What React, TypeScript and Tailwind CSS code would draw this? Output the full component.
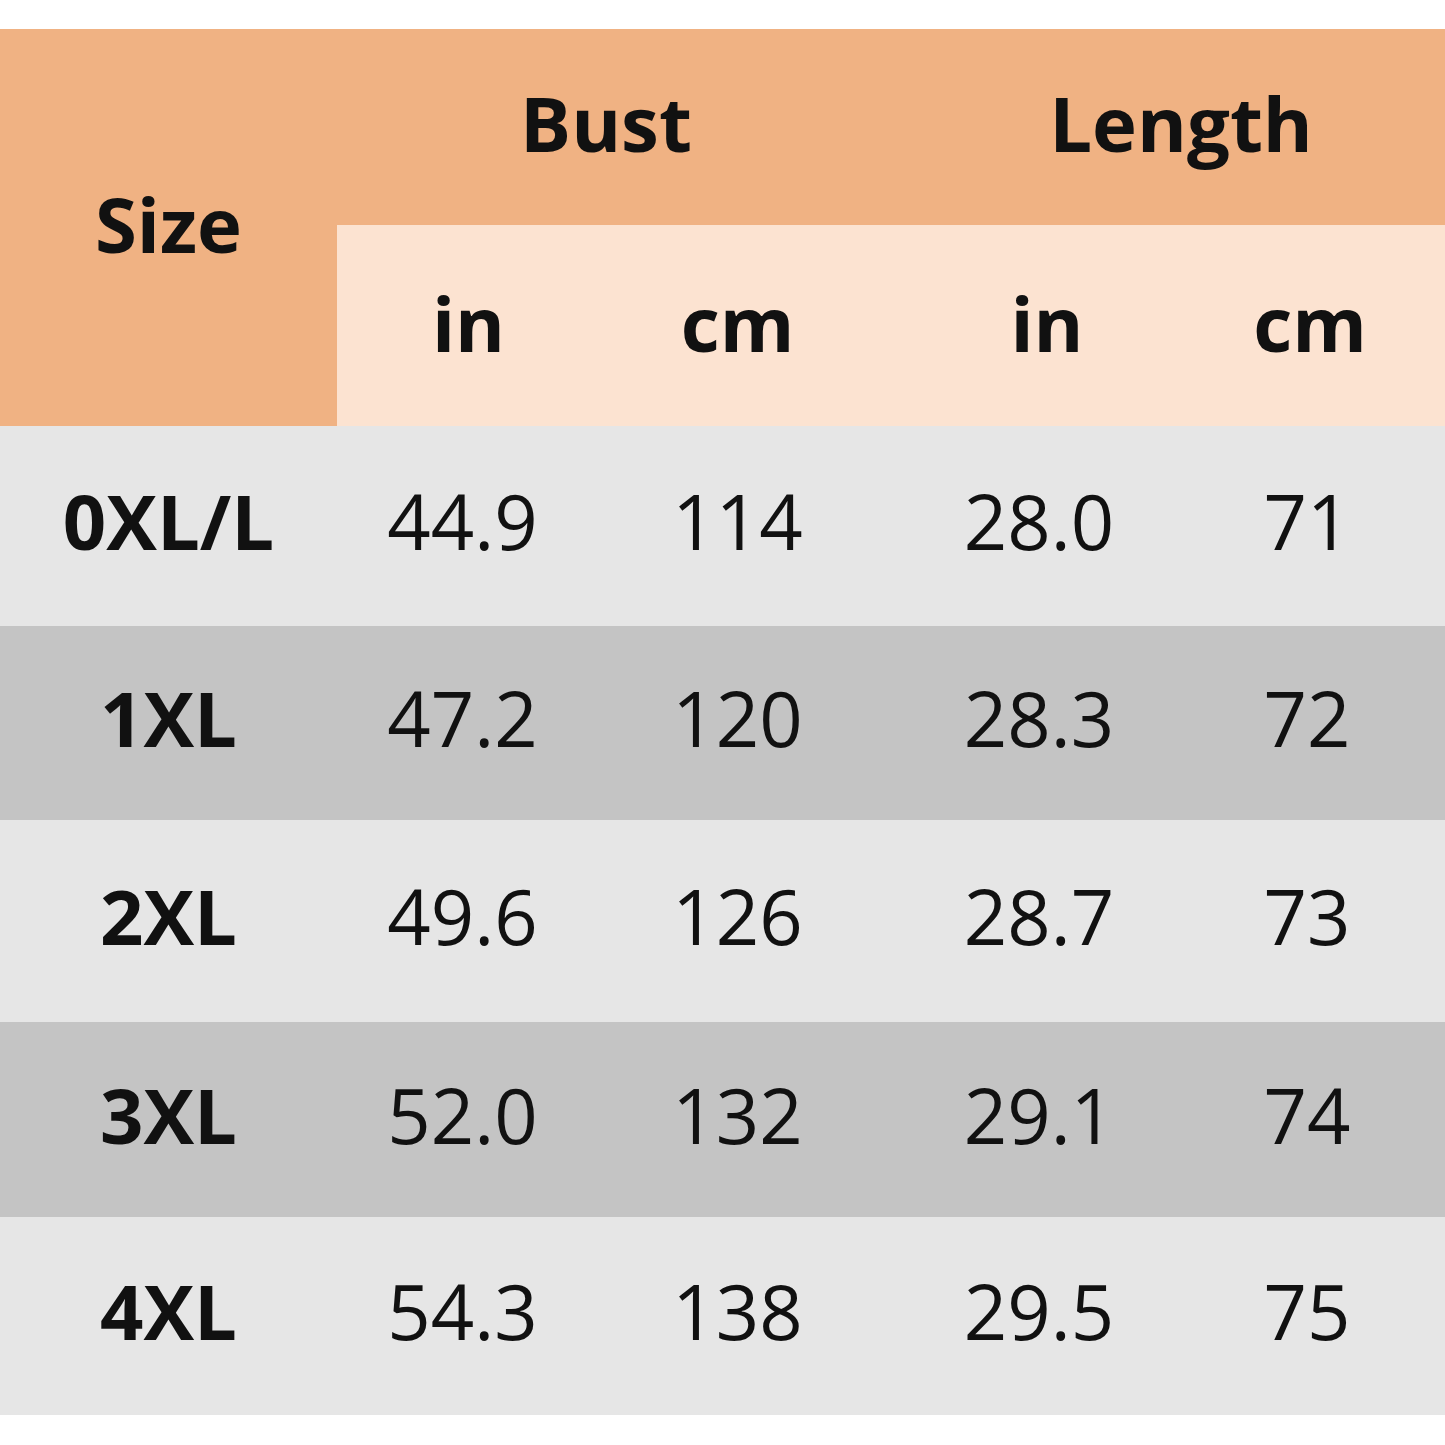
import React from "react";

type Row = { size: string; bustIn: string; bustCm: string; lenIn: string; lenCm: string; h: string; bg: string };

const rows: Row[] = [
  { size: "0XL/L", bustIn: "44.9", bustCm: "114", lenIn: "28.0", lenCm: "71", h: "h-[200px]", bg: "bg-[#e6e6e6]" },
  { size: "1XL", bustIn: "47.2", bustCm: "120", lenIn: "28.3", lenCm: "72", h: "h-[194px]", bg: "bg-[#c4c4c4]" },
  { size: "2XL", bustIn: "49.6", bustCm: "126", lenIn: "28.7", lenCm: "73", h: "h-[202px]", bg: "bg-[#e6e6e6]" },
  { size: "3XL", bustIn: "52.0", bustCm: "132", lenIn: "29.1", lenCm: "74", h: "h-[195px]", bg: "bg-[#c4c4c4]" },
  { size: "4XL", bustIn: "54.3", bustCm: "138", lenIn: "29.5", lenCm: "75", h: "h-[198px]", bg: "bg-[#e6e6e6]" },
];

const cols = "grid grid-cols-[337px_263px_275px_300px_270px]";

export default function App() {
  return (
    <div className="w-[1445px] h-[1445px] bg-white pt-[29px] text-[#111] font-['Open_Sans','Noto_Sans',sans-serif]">
      {/* header: Size spans both header rows */}
      <div className={`${cols} grid-rows-[196px_201px] bg-[#f0b283]`}>
        <div className="row-span-2 flex items-center justify-center pb-[8px] text-[76px] font-bold">Size</div>
        <div className="col-span-2 flex items-center justify-center pb-[8px] text-[76px] font-bold">Bust</div>
        <div className="col-span-2 flex items-center justify-center pl-[42px] pb-[8px] text-[76px] font-bold">Length</div>
        <div className="col-span-4 grid grid-cols-[263px_275px_300px_270px] bg-[#fce3d1]">
          <div className="flex items-center justify-center pb-[6px] text-[76px] font-bold">in</div>
          <div className="flex items-center justify-center pb-[6px] text-[76px] font-bold">cm</div>
          <div className="flex items-center justify-center pl-[44px] pb-[6px] text-[76px] font-bold">in</div>
          <div className="flex items-center justify-center pb-[6px] text-[76px] font-bold">cm</div>
        </div>
      </div>
      {rows.map((r) => (
        <div key={r.size} className={`${cols} ${r.h} ${r.bg} items-center pb-[10px] text-[76px]`}>
          <div className="text-center font-bold">{r.size}</div>
          <div className="text-center pr-[12px]">{r.bustIn}</div>
          <div className="text-center">{r.bustCm}</div>
          <div className="text-center pl-[28px]">{r.lenIn}</div>
          <div className="text-center pr-[6px]">{r.lenCm}</div>
        </div>
      ))}
    </div>
  );
}
